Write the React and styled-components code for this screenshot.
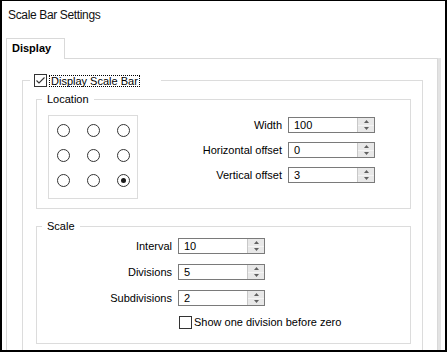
import React from 'react';
import styled, { createGlobalStyle } from 'styled-components';

const Global = createGlobalStyle`
  html, body { margin: 0; padding: 0; background: #fff; }
  body { font-family: "Liberation Sans", Arial, sans-serif; color: #000; }
`;

const Window = styled.div`
  width: 447px;
  height: 352px;
  box-sizing: border-box;
  border: 2px solid #000;
  border-top-width: 1px;
  overflow: hidden;
  background: #fff;
  display: flex;
  flex-direction: column;
`;

const Title = styled.div`
  flex: none;
  height: 37px;
  box-sizing: border-box;
  padding: 6px 0 0 6px;
  font-size: 12px;
  letter-spacing: -0.35px;
  line-height: 16px;
  color: #111;
`;

const TabRow = styled.div`
  flex: none;
  display: flex;
  padding-left: 4px;
`;

const Tab = styled.div`
  width: 59px;
  height: 21px;
  box-sizing: border-box;
  border: 1px solid #d9d9d9;
  border-bottom: none;
  background: #fff;
  margin-bottom: -1px;
  position: relative;
  z-index: 1;
  padding: 3px 0 0 5px;
  font-size: 11px;
  font-weight: bold;
  line-height: 13px;
`;

const Panel = styled.div`
  flex: none;
  margin-left: 4px;
  width: 432px;
  box-sizing: border-box;
  border: 1px solid #d9d9d9;
  box-shadow: 3px 0 0 #e3e3e3;
  padding: 15px 0 0 15px;
`;

const Group = styled.fieldset`
  margin: ${p => p.$mt || 0}px 0 0 0;
  padding: 0;
  min-width: 0;
  width: ${p => p.$w}px;
  box-sizing: border-box;
  border: 1px solid #dcdcdc;
`;

const Legend = styled.legend`
  margin-left: ${p => p.$ml}px;
  padding: 0 ${p => p.$pr}px 0 ${p => p.$pl}px;
  width: ${p => (p.$w ? `${p.$w}px` : 'auto')};
  box-sizing: border-box;
  height: 13px;
  display: flex;
  align-items: center;
  font-size: 11px;
  line-height: 13px;
`;

const GroupBody = styled.div`
  padding: ${p => p.$pad};
  display: ${p => p.$display || 'block'};
`;

const FocusLabel = styled.span`
  display: inline-block;
  margin-left: 2px;
  padding: 0 1px;
  border: 1px dotted #000;
  line-height: 10px;
  height: 10px;
  font-size: 11px;
`;

const Box = styled.span`
  flex: none;
  display: inline-flex;
  align-items: center;
  justify-content: center;
  width: 13px;
  height: 13px;
  box-sizing: border-box;
  border: 1px solid #333;
  background: #fff;
`;

const RadioPad = styled.div`
  flex: none;
  width: 90px;
  height: 84px;
  box-sizing: border-box;
  border: 1px solid #dcdcdc;
  padding: 8px 0 0 8px;
  display: grid;
  grid-template-columns: repeat(3, 13px);
  grid-auto-rows: 13px;
  column-gap: 17px;
  row-gap: 12px;
`;

const Radio = styled.span`
  width: 13px;
  height: 13px;
  box-sizing: border-box;
  border: 1px solid #333;
  border-radius: 50%;
  background: #fff;
  display: flex;
  align-items: center;
  justify-content: center;
  &::after {
    content: '';
    display: ${p => (p.$on ? 'block' : 'none')};
    width: 5px;
    height: 5px;
    border-radius: 50%;
    background: #1a1a1a;
  }
`;

const FieldGrid = styled.div`
  display: grid;
  grid-template-columns: ${p => p.$cols};
  grid-auto-rows: 16px;
  column-gap: 6px;
  row-gap: ${p => p.$gap}px;
  align-content: start;
  margin: ${p => p.$margin};
`;

const Label = styled.span`
  justify-self: end;
  align-self: center;
  font-size: 11px;
  line-height: 14px;
  white-space: nowrap;
`;

const Spin = styled.div`
  width: 87px;
  height: 16px;
  box-sizing: border-box;
  border: 1px solid #7a7a7a;
  display: flex;
  background: #fff;
`;

const SpinText = styled.div`
  flex: 1;
  padding-left: 5px;
  font-size: 11px;
  line-height: 14px;
`;

const SpinButtons = styled.div`
  width: 17px;
  box-sizing: border-box;
  border-left: 1px solid #c8c8c8;
  background: #e8e8e8;
  display: flex;
  flex-direction: column;
`;

const SpinHalf = styled.div`
  flex: 1;
  display: flex;
  align-items: center;
  justify-content: center;
  border-top: ${p => (p.$down ? '1px solid #f4f4f4' : 'none')};
`;

const CheckRow = styled.div`
  grid-column: 2;
  display: flex;
  align-items: center;
  margin-left: 1px;
  height: 13px;
  align-self: start;
  white-space: nowrap;
  font-size: 11px;
  line-height: 13px;
`;

const CheckText = styled.span`
  margin-left: 2px;
`;

function Arrow({ down }) {
  return (
    <svg width="5" height="3" viewBox="0 0 5 3">
      <path d={down ? 'M0 0H5L2.5 3Z' : 'M0 3H5L2.5 0Z'} fill="#606060" />
    </svg>
  );
}

function NumberField({ value }) {
  return (
    <Spin>
      <SpinText>{value}</SpinText>
      <SpinButtons>
        <SpinHalf><Arrow /></SpinHalf>
        <SpinHalf $down><Arrow down /></SpinHalf>
      </SpinButtons>
    </Spin>
  );
}

function Check({ on }) {
  return (
    <Box>
      {on && (
        <svg width="11" height="11" viewBox="0 0 11 11">
          <path d="M1.5 5.5L4 8L9.5 2.5" fill="none" stroke="#333" strokeWidth="1.1" />
        </svg>
      )}
    </Box>
  );
}

export default function App() {
  const radios = [0, 0, 0, 0, 0, 0, 0, 0, 1];
  return (
    <>
      <Global />
      <Window>
        <Title>Scale Bar Settings</Title>
        <TabRow>
          <Tab>Display</Tab>
        </TabRow>
        <Panel>
          <Group $w={401}>
            <Legend $ml={7} $pl={4} $pr={0} $w={131}>
              <Check on />
              <FocusLabel>Display Scale Bar</FocusLabel>
            </Legend>
            <GroupBody $pad="6px 0 20px 13px">
              <Group $w={375}>
                <Legend $ml={5} $pl={5} $pr={5}>Location</Legend>
                <GroupBody $pad="9px 0 9px 11px" $display="flex">
                  <RadioPad>
                    {radios.map((r, i) => (
                      <Radio key={i} $on={!!r} />
                    ))}
                  </RadioPad>
                  <FieldGrid $cols="auto 87px" $gap={9} $margin="2px 35px 0 auto">
                    <Label>Width</Label>
                    <NumberField value="100" />
                    <Label>Horizontal offset</Label>
                    <NumberField value="0" />
                    <Label>Vertical offset</Label>
                    <NumberField value="3" />
                  </FieldGrid>
                </GroupBody>
              </Group>
              <Group $w={375} $mt={11}>
                <Legend $ml={5} $pl={5} $pr={5}>Scale</Legend>
                <GroupBody $pad="5px 0 11px 0">
                  <FieldGrid $cols="135px 87px" $gap={10} $margin="0">
                    <Label>Interval</Label>
                    <NumberField value="10" />
                    <Label>Divisions</Label>
                    <NumberField value="5" />
                    <Label>Subdivisions</Label>
                    <NumberField value="2" />
                    <CheckRow>
                      <Check />
                      <CheckText>Show one division before zero</CheckText>
                    </CheckRow>
                  </FieldGrid>
                </GroupBody>
              </Group>
            </GroupBody>
          </Group>
        </Panel>
      </Window>
    </>
  );
}
